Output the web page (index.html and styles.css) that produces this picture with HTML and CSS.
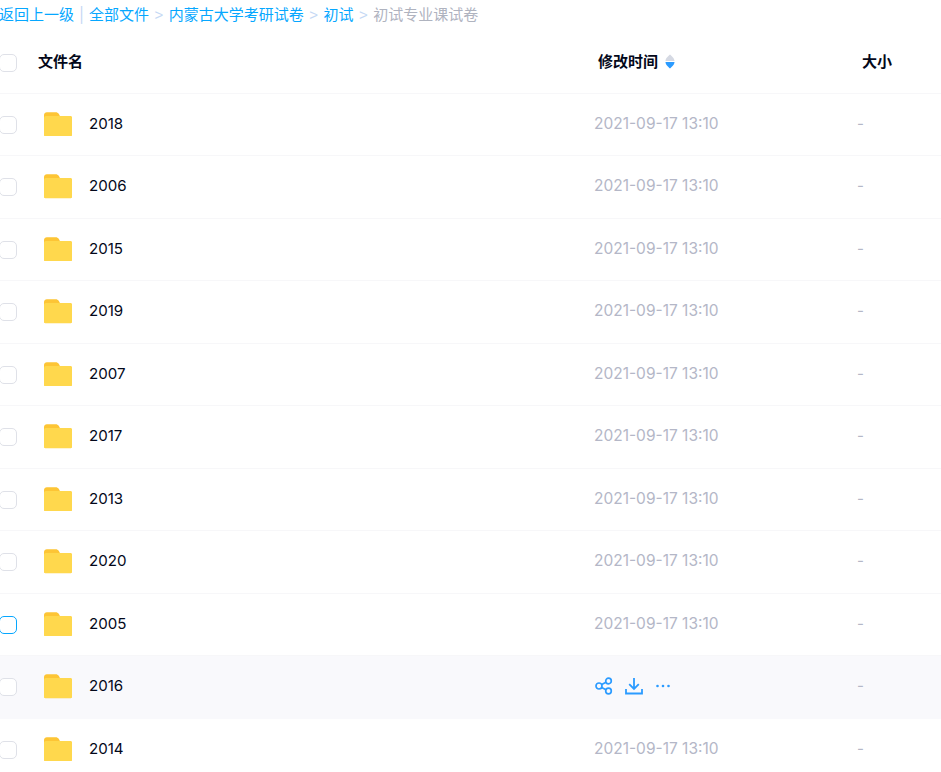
FILE: index.html
```html
<!DOCTYPE html>
<html lang="zh">
<head>
<meta charset="utf-8">
<title>初试专业课试卷</title>
<link rel="stylesheet" href="styles.css">
</head>
<body>
<svg width="0" height="0" class="defs">
  <symbol id="folder" viewBox="0 0 29 25">
    <path d="M0 3c0-1.700 1.300-3 3-3h9c1.500 0 2.500.6 3.300 1.700L16.500 4H27c1.100 0 2 .9 2 2v17c0 1.100-.9 2-2 2H2c-1.100 0-2-.9-2-2z" fill="#fdc535"/>
    <path d="M0 6c0-1.100.9-2 2-2h25c1.100 0 2 .9 2 2v17c0 1.100-.9 2-2 2H2c-1.100 0-2-.9-2-2z" fill="#ffd84d"/>
  </symbol>
</svg>
<nav class="crumbs">
  <a class="link">返回上一级</a><span class="bar">|</span><a class="link">全部文件</a><span class="sep">&gt;</span><a class="link">内蒙古大学考研试卷</a><span class="sep">&gt;</span><a class="link">初试</a><span class="sep">&gt;</span><span class="current">初试专业课试卷</span>
</nav>
<div class="table">
  <div class="row head">
    <div class="name"><span class="check"></span><span class="title">文件名</span></div>
    <div class="time"><span class="title">修改时间</span>
      <svg class="sort" width="10" height="15" viewBox="0 0 10 15"><path d="M5 .5C6.500 2 9.500 4 9.500 7H.5C.5 4 3.500 2 5 .5z" fill="#d5d9e3"/><path d="M5 14.500C6.500 13 9.500 11 9.500 8H.5C.5 11 3.500 13 5 14.500z" fill="#2b9bff"/></svg>
    </div>
    <div class="size"><span class="title">大小</span></div>
  </div>
  <div class="row"><div class="name"><span class="check"></span><svg class="folder"><use href="#folder"/></svg><span class="fname">2018</span></div><div class="time">2021-09-17 13:10</div><div class="size">-</div></div>
  <div class="row"><div class="name"><span class="check"></span><svg class="folder"><use href="#folder"/></svg><span class="fname">2006</span></div><div class="time">2021-09-17 13:10</div><div class="size">-</div></div>
  <div class="row"><div class="name"><span class="check"></span><svg class="folder"><use href="#folder"/></svg><span class="fname">2015</span></div><div class="time">2021-09-17 13:10</div><div class="size">-</div></div>
  <div class="row"><div class="name"><span class="check"></span><svg class="folder"><use href="#folder"/></svg><span class="fname">2019</span></div><div class="time">2021-09-17 13:10</div><div class="size">-</div></div>
  <div class="row"><div class="name"><span class="check"></span><svg class="folder"><use href="#folder"/></svg><span class="fname">2007</span></div><div class="time">2021-09-17 13:10</div><div class="size">-</div></div>
  <div class="row"><div class="name"><span class="check"></span><svg class="folder"><use href="#folder"/></svg><span class="fname">2017</span></div><div class="time">2021-09-17 13:10</div><div class="size">-</div></div>
  <div class="row"><div class="name"><span class="check"></span><svg class="folder"><use href="#folder"/></svg><span class="fname">2013</span></div><div class="time">2021-09-17 13:10</div><div class="size">-</div></div>
  <div class="row"><div class="name"><span class="check"></span><svg class="folder"><use href="#folder"/></svg><span class="fname">2020</span></div><div class="time">2021-09-17 13:10</div><div class="size">-</div></div>
  <div class="row"><div class="name"><span class="check focus"></span><svg class="folder"><use href="#folder"/></svg><span class="fname">2005</span></div><div class="time">2021-09-17 13:10</div><div class="size">-</div></div>
  <div class="row hover"><div class="name"><span class="check"></span><svg class="folder"><use href="#folder"/></svg><span class="fname">2016</span></div>
    <div class="time actions">
      <svg class="act" width="18" height="18" viewBox="0 0 18 18" fill="none" stroke="#2b9bff" stroke-width="1.700"><circle cx="4" cy="9" r="3"/><circle cx="13.500" cy="4" r="2.800"/><circle cx="13.500" cy="14" r="2.800"/><path d="M6.700 7.600 11 5.300M6.700 10.400 11 12.700"/></svg>
      <svg class="act" width="18" height="18" viewBox="0 0 18 18" fill="none" stroke="#2b9bff" stroke-width="1.800"><path d="M9 1v10.500M4.200 7.200 9 12l4.800-4.800M1 12v4.500h16V12"/></svg>
      <svg class="act" width="16" height="18" viewBox="0 0 16 18" fill="#2b9bff"><circle cx="2.500" cy="9" r="1.300"/><circle cx="8" cy="9" r="1.300"/><circle cx="13.500" cy="9" r="1.300"/></svg>
    </div>
    <div class="size">-</div></div>
  <div class="row"><div class="name"><span class="check"></span><svg class="folder"><use href="#folder"/></svg><span class="fname">2014</span></div><div class="time">2021-09-17 13:10</div><div class="size">-</div></div>
</div>
</body>
</html>
```
FILE: styles.css
```css
html, body {
  margin: 0;
  padding: 0;
  height: 772px;
  overflow: hidden;
  background: #fff;
}
body {
  font-family: Inter, "Noto Sans CJK SC", sans-serif;
  font-size: 15px;
}
.defs { position: absolute; }
.crumbs {
  height: 32px;
  line-height: 30px;
  white-space: nowrap;
  font-size: 15px;
  margin-left: -1px;
}
.link { color: #06a7ff; }
.bar {
  display: inline-block;
  width: 15px;
  text-align: center;
  color: #c4d8f4;
}
.sep {
  display: inline-block;
  width: 19.700px;
  text-align: center;
  color: #c4d8f4;
  font-family: "Liberation Sans", sans-serif;
}
.current { color: #afb3bf; }
.table { display: flex; flex-direction: column; }
.row {
  display: grid;
  grid-template-columns: 594px 263px 1fr;
  align-items: center;
  height: 62.5px;
  padding-bottom: 2px;
  box-sizing: border-box;
  border-bottom: 1px solid #f7f7f9;
}
.row.head { height: 61.500px; padding-bottom: 4px; }
.row.hover { background: #f9f9fc; border-bottom-color: #f9f9fc; }
.name { display: flex; align-items: center; color: #03081a; }
.check {
  width: 18px;
  height: 18px;
  box-sizing: border-box;
  border: 1px solid #dfe1e8;
  border-radius: 5px;
  background: #fff;
  margin-left: -1px;
  margin-top: 3px;
  flex: none;
}
.check.focus { border-color: #06a7ff; }
.title {
  font-weight: 700;
  color: #03081a;
  font-size: 15px;
}
.head .check { margin-top: 6px; }
.head .name .title { margin-left: 21px; }
.head .time { display: flex; align-items: center; padding-left: 4px; }
.head .size { padding-left: 5px; }
.sort { margin-left: 7px; margin-top: 2px; }
.folder { width: 28px; height: 24.500px; margin-left: 27px; margin-top: 1px; flex: none; }
.fname { margin-left: 17px; font-size: 15.100px; }
.time { color: #b4b7c7; font-size: 15.500px; }
.size { color: #b4b7c7; font-size: 15px; }
.actions { display: flex; align-items: center; gap: 12px; padding-left: 1px; }
```
